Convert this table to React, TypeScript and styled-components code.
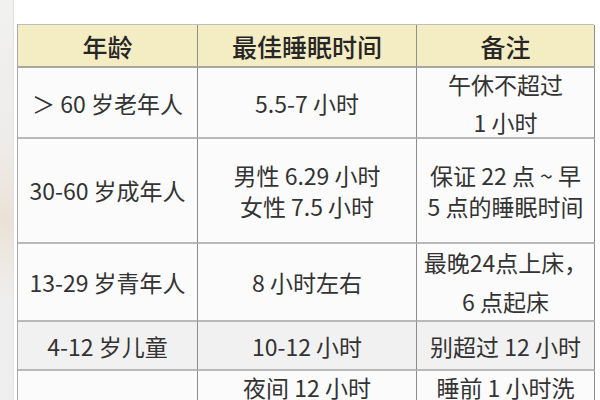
import React from 'react';
import styled, { createGlobalStyle } from 'styled-components';

const GlobalStyle = createGlobalStyle`
  html, body {
    margin: 0;
    padding: 0;
    background: #ffffff;
  }
  * {
    box-sizing: border-box;
  }
`;

type Row = {
  height: number;
  lineHeight: number;
  shade?: boolean;
  cells: string[][];
};

const rows: Row[] = [
  { height: 71, lineHeight: 38, cells: [['＞ 60 岁老年人'], ['5.5-7 小时'], ['午休不超过', '1 小时']] },
  {
    height: 105,
    lineHeight: 31,
    cells: [['30-60 岁成年人'], ['男性 6.29 小时', '女性 7.5 小时'], ['保证 22 点 ~ 早', '5 点的睡眠时间']],
  },
  { height: 78, lineHeight: 39, cells: [['13-29 岁青年人'], ['8 小时左右'], ['最晚24点上床，', '6 点起床']] },
  { height: 49, lineHeight: 30, shade: true, cells: [['4-12 岁儿童'], ['10-12 小时'], ['别超过 12 小时']] },
  {
    height: 92,
    lineHeight: 29,
    cells: [
      ['1-3 岁幼儿'],
      ['夜间 12 小时', '白天 2-3 小时', '（分 1-2 次）'],
      ['睡前 1 小时洗', '个温水澡', '助眠'],
    ],
  },
];

const headers = ['年龄', '最佳睡眠时间', '备注'];

const App: React.FC = () => {
  return (
    <>
      <GlobalStyle />
      <Page>
        <EdgeStrip />
        <Sheet>
          <Table>
            {headers.map((h) => (
              <HeaderCell key={h}>{h}</HeaderCell>
            ))}
            {rows.map((row, i) =>
              row.cells.map((lines, j) => (
                <Cell
                  key={`${i}-${j}`}
                  $height={row.height}
                  $lineHeight={row.lineHeight}
                  $shade={row.shade}
                >
                  {lines.map((line) => (
                    <Line key={line}>{line}</Line>
                  ))}
                </Cell>
              ))
            )}
          </Table>
        </Sheet>
      </Page>
    </>
  );
};

const Page = styled.div`
  display: flex;
  width: 600px;
  height: 400px;
  overflow: hidden;
  background: #ffffff;
  font-family: 'Noto Sans CJK SC', 'Noto Sans', sans-serif;
  color: #333333;
`;

const EdgeStrip = styled.div`
  width: 14px;
  flex-shrink: 0;
  background: linear-gradient(
    180deg,
    #f1f1f0 0%,
    #eeeceb 35%,
    #ebe2d6 55%,
    #eeeeee 75%,
    #efefef 100%
  );
  border-right: 1px solid #e2e2e2;
`;

const Sheet = styled.div`
  flex: 1;
  padding: 24px 0 0 3px;
`;

const Table = styled.div`
  display: grid;
  grid-template-columns: 180px 219px 178px;
  width: 577px;
  border-left: 1px solid #a9a9a9;
  border-top: 1px solid #bdbdbd;
`;

const HeaderCell = styled.div`
  height: 43px;
  display: flex;
  align-items: center;
  justify-content: center;
  background: #f4ecc3;
  border-right: 1px solid #8f8f8f;
  border-bottom: 2px solid #a8a8a0;
  font-size: 25px;
  font-weight: 500;
  color: #262626;
`;

const Cell = styled.div<{ $height: number; $lineHeight: number; $shade?: boolean }>`
  height: ${({ $height }) => $height}px;
  display: flex;
  flex-direction: column;
  align-items: center;
  justify-content: center;
  background: ${({ $shade }) => ($shade ? '#f1f1f1' : '#fbfbfb')};
  border-right: 1px solid #8c8c8c;
  border-bottom: 2px solid #b9b9b9;
  font-size: 23px;
  line-height: ${({ $lineHeight }) => $lineHeight}px;
  white-space: nowrap;
`;

const Line = styled.span`
  display: block;
`;

export default App;
